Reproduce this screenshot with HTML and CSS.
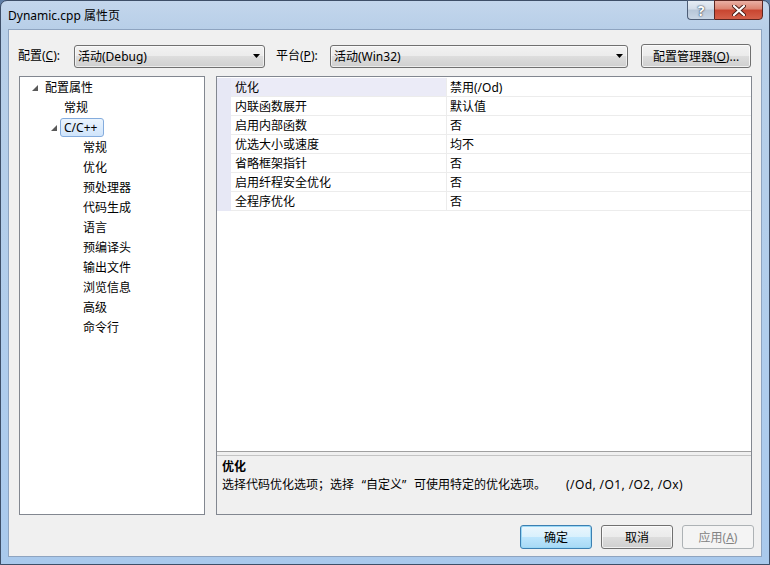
FILE: index.html
```html
<!DOCTYPE html>
<html lang="zh-CN">
<head>
  <meta charset="UTF-8" />
  <title>Dynamic.cpp 属性页</title>
  <link rel="stylesheet" href="styles.css">
</head>
<body>
  <div class="window">
    <div class="titlebar">
      <div class="title">Dynamic.cpp 属性页</div>
      <div class="caption-buttons">
        <div class="cap-btn cap-help">?</div>
        <div class="cap-btn cap-close">
          <svg width="14" height="11" viewBox="0 0 14 11">
            <path d="M2 1 L12 10 M12 1 L2 10" stroke="#4a1c16" stroke-width="4" stroke-linecap="round"/>
            <path d="M2 1 L12 10 M12 1 L2 10" stroke="#fff" stroke-width="2.2" stroke-linecap="round"/>
          </svg>
        </div>
      </div>
    </div>

    <div class="client">
      <div class="toolbar">
        <label class="field-label label-cfg">配置(<u>C</u>):</label>
        <div class="combo combo-cfg">
          <span>活动(Debug)</span>
          <svg class="arrow" width="7" height="4" viewBox="0 0 7 4"><polygon points="0,0 7,0 3.5,4" fill="#000"/></svg>
        </div>
        <label class="field-label label-plat">平台(<u>P</u>):</label>
        <div class="combo combo-plat">
          <span>活动(Win32)</span>
          <svg class="arrow" width="7" height="4" viewBox="0 0 7 4"><polygon points="0,0 7,0 3.5,4" fill="#000"/></svg>
        </div>
        <button class="btn btn-mgr">配置管理器(<u>O</u>)...</button>
      </div>

      <div class="main">
        <div class="tree">
          <div class="node lvl-0">
            <span class="toggle"><svg width="6" height="6" viewBox="0 0 6 6"><polygon points="6,0 6,6 0,6" fill="#595959"/></svg></span>
            <span class="node-label">配置属性</span>
          </div>
          <div class="node lvl-1"><span class="toggle"></span><span class="node-label">常规</span></div>
          <div class="node lvl-1">
            <span class="toggle"><svg width="6" height="6" viewBox="0 0 6 6"><polygon points="6,0 6,6 0,6" fill="#595959"/></svg></span>
            <span class="node-label selected">C/C++</span>
          </div>
          <div class="node lvl-2"><span class="toggle"></span><span class="node-label">常规</span></div>
          <div class="node lvl-2"><span class="toggle"></span><span class="node-label">优化</span></div>
          <div class="node lvl-2"><span class="toggle"></span><span class="node-label">预处理器</span></div>
          <div class="node lvl-2"><span class="toggle"></span><span class="node-label">代码生成</span></div>
          <div class="node lvl-2"><span class="toggle"></span><span class="node-label">语言</span></div>
          <div class="node lvl-2"><span class="toggle"></span><span class="node-label">预编译头</span></div>
          <div class="node lvl-2"><span class="toggle"></span><span class="node-label">输出文件</span></div>
          <div class="node lvl-2"><span class="toggle"></span><span class="node-label">浏览信息</span></div>
          <div class="node lvl-2"><span class="toggle"></span><span class="node-label">高级</span></div>
          <div class="node lvl-2"><span class="toggle"></span><span class="node-label">命令行</span></div>
        </div>

        <div class="props">
          <div class="grid">
            <div class="grid-body">
              <div class="gutter"></div>
              <div class="rows">
                <div class="row active"><div class="name">优化</div><div class="value">禁用(/Od)</div></div>
                <div class="row"><div class="name">内联函数展开</div><div class="value">默认值</div></div>
                <div class="row"><div class="name">启用内部函数</div><div class="value">否</div></div>
                <div class="row"><div class="name">优选大小或速度</div><div class="value">均不</div></div>
                <div class="row"><div class="name">省略框架指针</div><div class="value">否</div></div>
                <div class="row"><div class="name">启用纤程安全优化</div><div class="value">否</div></div>
                <div class="row"><div class="name">全程序优化</div><div class="value">否</div></div>
              </div>
            </div>
          </div>
          <div class="desc">
            <div class="desc-title">优化</div>
            <div class="desc-text">选择代码优化选项；选择<span class="q q-open">“</span>自定义<span class="q q-close">”</span>可使用特定的优化选项。<span class="desc-switches">(/Od, /O1, /O2, /Ox)</span></div>
          </div>
        </div>
      </div>

      <div class="actions">
        <button class="btn btn-default">确定</button>
        <button class="btn">取消</button>
        <button class="btn btn-disabled">应用(<u>A</u>)</button>
      </div>
    </div>
  </div>
</body>
</html>
```

FILE: styles.css
```css
* {
  box-sizing: border-box;
}

html,
body {
  margin: 0;
  height: 100%;
}

body {
  font-family: "Noto Sans", "Noto Sans CJK SC", sans-serif;
  font-size: 12px;
  color: #000;
  background: #5f7ea6;
  overflow: hidden;
}

/* window frame */
.window {
  height: 565px;
  display: flex;
  flex-direction: column;
  padding: 0 7px 7px;
  border: 1px solid #3e4f68;
  border-radius: 7px 7px 0 0;
  background: linear-gradient(180deg, #c3d6ec 0, #b8cfe8 28px, #b0cdec 60%, #a9c9ec 100%);
}

.titlebar {
  height: 28px;
  flex: none;
  display: flex;
  align-items: flex-start;
}

.title {
  padding: 7px 0 0 0;
  line-height: 16px;
}

.caption-buttons {
  margin-left: auto;
  margin-right: -1px;
  margin-top: -1px;
  display: flex;
}

.cap-btn {
  height: 20px;
  display: flex;
  align-items: center;
  justify-content: center;
}

.cap-help {
  width: 27px;
  border: 1px solid #4d5d76;
  border-right: none;
  border-radius: 0 0 0 4px;
  background: linear-gradient(180deg, #e6edf5 0%, #d3dde9 45%, #b7c6d8 50%, #c9d6e5 100%);
  color: #fff;
  font-weight: bold;
  font-size: 14px;
  text-shadow: 0 0 2px #2b3a50, 0 0 1px #2b3a50;
}

.cap-close {
  width: 49px;
  border: 1px solid #5c2621;
  border-radius: 0 0 4px 0;
  background: linear-gradient(180deg, #eab0a4 0%, #dc8370 45%, #c84530 50%, #d4604a 100%);
}

/* client area */
.client {
  flex: 1;
  display: flex;
  flex-direction: column;
  background: #f0f0f0;
  border: 1px solid #8ea4c0;
  padding: 14px 7px 7px 9px;
}

.toolbar {
  height: 24px;
  display: flex;
  align-items: center;
  margin-right: 3px;
}

.field-label {
  line-height: 16px;
}

.label-cfg {
  width: 56px;
}

.label-plat {
  width: 54px;
  margin-left: 11px;
}

.combo {
  height: 23px;
  display: flex;
  align-items: center;
  padding-left: 3px;
  border: 1px solid #707070;
  border-radius: 3px;
  background: linear-gradient(180deg, #f2f2f2 0%, #ebebeb 50%, #dddddd 50%, #cfcfcf 100%);
  box-shadow: inset 0 0 0 1px rgba(255, 255, 255, 0.6);
}

.combo .arrow {
  margin-left: auto;
  margin-right: 4px;
}

.combo-cfg {
  width: 191px;
}

.combo-plat {
  width: 298px;
}

.btn {
  font-family: inherit;
  font-size: 12px;
  color: #000;
  height: 24px;
  width: 72px;
  padding: 0;
  border: 1px solid #707070;
  border-radius: 3px;
  background: linear-gradient(180deg, #f2f2f2 0%, #ebebeb 50%, #dddddd 50%, #cfcfcf 100%);
  box-shadow: inset 0 0 0 1px rgba(255, 255, 255, 0.7);
}

.btn-mgr {
  width: 110px;
  margin-left: 13px;
}

.btn-default {
  border-color: #3c7fb1;
  background: linear-gradient(180deg, #eaf6fd 0%, #d9f0fc 50%, #bee6fd 50%, #a7d9f5 100%);
  box-shadow: inset 0 0 0 1px #9ad8f6;
}

.btn-disabled {
  color: #838383;
  border-color: #adb2b5;
  background: #f4f4f4;
  box-shadow: none;
}

/* tree + property grid */
.main {
  height: 439px;
  flex: none;
  display: flex;
  gap: 11px;
  margin-top: 8px;
  margin-right: 2px;
}

.tree {
  width: 186px;
  margin-left: 1px;
  border: 1px solid #828790;
  background: #fff;
  padding-left: 8px;
}

.node {
  height: 20px;
  display: flex;
  align-items: flex-end;
}

.lvl-1 {
  padding-left: 19px;
}

.lvl-2 {
  padding-left: 38px;
}

.toggle {
  width: 13px;
  height: 19px;
  display: flex;
  align-items: center;
  padding-left: 4px;
  padding-top: 1px;
}

.node-label {
  height: 19px;
  line-height: 17px;
  padding: 0 3px;
  border: 1px solid transparent;
  border-radius: 3px;
}

.node-label.selected {
  border-color: #84acdd;
  background: linear-gradient(180deg, #ebf4fd 0%, #cfe4fb 100%);
  padding-right: 6px;
}

.props {
  flex: 1;
  display: flex;
  flex-direction: column;
  border: 1px solid #828790;
}

.grid {
  flex: 1;
  background: #fff;
  padding-top: 1px;
  border-bottom: 1px solid #a0a0a0;
}

.grid-body {
  display: flex;
}

.gutter {
  width: 14px;
  background: #e7e8f5;
}

.rows {
  flex: 1;
}

.row {
  height: 19px;
  display: flex;
  border-bottom: 1px solid #ececec;
  line-height: 19px;
}

.name {
  width: 215px;
  padding-left: 4px;
}

.row.active .name {
  background: #ebebf7;
}

.value {
  flex: 1;
  padding-left: 3px;
  border-left: 1px solid #ececec;
}

.desc {
  height: 59px;
  flex: none;
  margin-top: 3px;
  border-top: 1px solid #c4c4c4;
  padding: 2px 5px;
  line-height: 18px;
}

.desc-title {
  font-weight: bold;
}

.q {
  display: inline-block;
  width: 12px;
}

.q-open {
  text-align: right;
}

.q-close {
  text-align: left;
}

.desc-switches {
  margin-left: 20px;
  letter-spacing: 0.4px;
}

.actions {
  display: flex;
  justify-content: flex-end;
  gap: 9px;
  margin-top: 10px;
}
```
